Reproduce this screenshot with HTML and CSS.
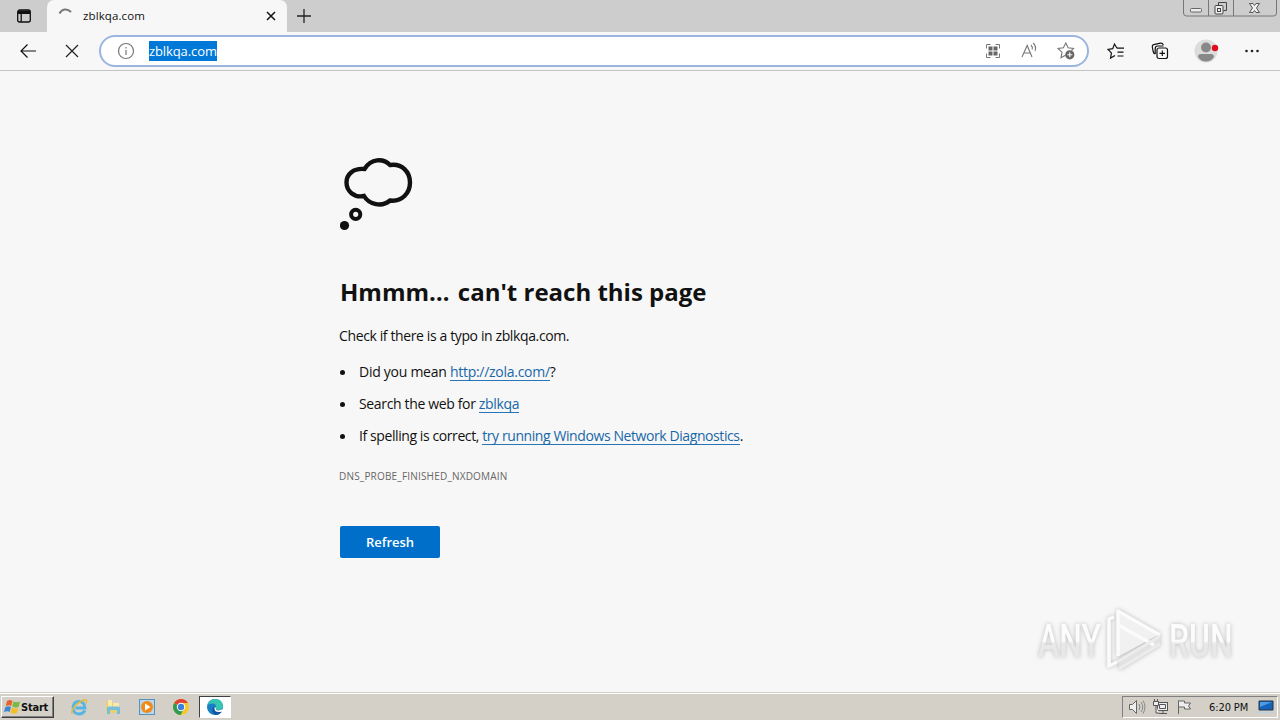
FILE: index.html
```html
<!DOCTYPE html>
<html lang="en">
<head>
    <meta charset="UTF-8">
    <meta name="viewport" content="width=device-width, initial-scale=1.0">
    <title>zblkqa.com</title>
    <link rel="stylesheet" href="styles.css">
</head>
<body>
    <header class="tab-strip">
        <svg class="tab-actions" width="16" height="16" viewBox="0 0 16 16" fill="none" stroke="#111" stroke-width="1.3"><rect x="1.7" y="2" width="12.6" height="12" rx="2"/><path d="M2 3.5h12M2 5h12" stroke-width="2"/><path d="M5.2 5v9"/></svg>
        <div class="tab">
            <svg class="spinner" width="16" height="16" viewBox="0 0 16 16" fill="none" stroke="#777" stroke-width="2"><path d="M1.500 5.500C4 1 9 0 13 4"/></svg>
            <span class="tab-title">zblkqa.com</span>
            <svg class="tab-close" width="10" height="10" viewBox="0 0 10 10" stroke="#111" stroke-width="1.5"><path d="M1 1l8 8M9 1L1 9"/></svg>
        </div>
        <svg class="new-tab" width="16" height="16" viewBox="0 0 16 16" stroke="#222" stroke-width="1.3"><path d="M8 1v14M1 8h14"/></svg>
        <svg class="window-buttons" width="94" height="17" viewBox="0 0 94 17" fill="none" stroke="#777"><path d="M.5 0v13q0 3 3 3h87q3 0 3-3V0M25.500 0v16M50.500 0v16"/><rect x="7.500" y="8.500" width="11" height="3.500" rx="1" fill="#eee" stroke="#666"/><path d="M35.500 5.500V2.500h8v8h-3" stroke="#444"/><rect x="32" y="5.500" width="8" height="8.500" rx="1" fill="#eee" stroke="#444"/><rect x="34.500" y="8.500" width="3" height="3" stroke="#444"/><path d="M66.500 3.500h3.500l1.500 2 1.500-2h3.500l-3 4.500 3 4.500h-3.500l-1.500-2-1.500 2h-3.500l3-4.500z" fill="#eee" stroke="#555"/></svg>
    </header>

    <nav class="toolbar">
        <svg class="back" width="18" height="16" viewBox="0 0 18 16" fill="none" stroke="#111" stroke-width="1.2"><path d="M17 8H2M8.500 1.500L2 8l6.500 6.500"/></svg>
        <svg class="stop" width="14" height="14" viewBox="0 0 14 14" stroke="#222" stroke-width="1.2"><path d="M1 1l12 12M13 1L1 13"/></svg>
        <div class="address-bar">
            <svg width="18" height="18" viewBox="0 0 18 18" fill="none" stroke="#777" stroke-width="1.2"><circle cx="9" cy="9" r="7.500"/><path d="M9 8v5M9 5v1.500"/></svg>
            <span class="url">zblkqa.com</span>
            <div class="address-icons">
                <svg width="16" height="16" viewBox="0 0 16 16" fill="none" stroke="#777"><path d="M1.500 5.500v-4h4M10.500 1.500h4v4M14.500 10.500v4h-4M5.500 14.500h-4v-4"/><path d="M3.500 3.500h4v4h-4zM8.500 3.500h4v4h-4zM3.500 8.500h4v4h-4zM8.500 8.500h4v4h-4z" fill="#666" stroke="none"/></svg>
                <svg width="18" height="18" viewBox="0 0 18 18" fill="none" stroke="#777" stroke-width="1.1"><path d="M2 15L7.200 3.500 12 15M3.800 11h6.600M11 3q2 2 1.200 4.500M13.200 1q3.500 3.500 1.800 8"/></svg>
                <svg width="18" height="18" viewBox="0 0 18 18" fill="none" stroke="#777" stroke-width="1.1"><path d="M8.500 13.200L4 15.800l1-5.600L1 6.500l5.400-.8L8.800 1l2.300 4.700 5.400.8-2 2"/><circle cx="12.800" cy="12.800" r="4.600" fill="#666" stroke="none"/><path d="M12.800 10.300v5M10.300 12.800h5" stroke="#fff"/></svg>
            </div>
        </div>
        <div class="tools">
            <svg width="18" height="18" viewBox="0 0 18 18" fill="none" stroke="#111" stroke-width="1.2"><path d="M10 6.200L7.500 2 5.700 6.700l-4.700.7 3.400 3.500-.8 5.100 4.400-2.500"/><path d="M10 6.200h7M10.500 10.200h6M10.500 14h6"/></svg>
            <svg width="18" height="18" viewBox="0 0 18 18" fill="none" stroke="#111" stroke-width="1.2"><path d="M4.200 12Q2.700 11.500 2.200 9.500L1.300 5Q1 3.200 2.700 2.700L9.500 1.200q2-.3 2.800 1.800"/><path d="M4.200 12V6.500q0-2.500 2.500-2.500h5.800"/><rect x="6" y="6" width="10.500" height="10.500" rx="2"/><path d="M11.300 8.500v5.500M8.500 11.300H14"/></svg>
            <svg class="profile" width="26" height="24" viewBox="0 0 26 24"><circle cx="12" cy="12" r="11.500" fill="#dcdcdc"/><circle cx="12" cy="8.500" r="5" fill="#888"/><path d="M4 18q0-3 3-3h10q3 0 3 3-3 4.500-8 4.500T4 18z" fill="#888"/><circle cx="21" cy="9" r="3.200" fill="#e00b1c"/></svg>
            <svg class="more" width="16" height="4" viewBox="0 0 16 4" fill="#222"><circle cx="2.500" cy="2" r="1.300"/><circle cx="8" cy="2" r="1.300"/><circle cx="13.500" cy="2" r="1.300"/></svg>
        </div>
    </nav>

    <main class="error-page">
        <svg class="cloud" width="74" height="74" viewBox="0 0 74 74" fill="none" stroke="#111" stroke-width="4.400"><path d="M24.500 11C31 .5 43 0 50 7c12-2 20 7 20 17.500S62 44 50 42.500c-8 7-21 4-26-4.500-10 2-17.500-5-17.500-13.500S13.500 10 24.500 11z"/><circle cx="15.700" cy="56.300" r="4.600" stroke-width="4"/><circle cx="4.500" cy="67.500" r="4.600" fill="#111" stroke="none"/></svg>
        <h1>Hmmm<span class="dots">…</span> can't reach this page</h1>
        <p class="summary">Check if there is a typo in zblkqa.com.</p>
        <ul class="suggestions">
            <li class="did-you-mean"><span>Did you mean <a href="#">http://zola.com/</a>?</span></li>
            <li class="search"><span>Search the web for <a href="#">zblkqa</a></span></li>
            <li class="diagnostics"><span>If spelling is correct, <a href="#">try running Windows Network Diagnostics</a>.</span></li>
        </ul>
        <p class="error-code">DNS_PROBE_FINISHED_NXDOMAIN</p>
        <button class="refresh" type="button">Refresh</button>

        <div class="watermark">
            <span>ANY</span>
            <svg width="60" height="66" viewBox="0 0 60 66" fill="none" stroke="#fbfbfb" stroke-linejoin="round"><path d="M14 4v44l41-22z" fill="#f1f1f1" stroke="none"/><path d="M14 52v9l41-25v-8z" fill="#e2e2e2" stroke="none"/><path d="M9 9l-5 2v47l8-4M13 48V3l42 24M13 17l36 20" stroke-width="3.500"/><path d="M12 54l43-26M14 61l41-25" stroke="#ececec" stroke-width="3"/></svg>
            <span>RUN</span>
        </div>
    </main>

    <footer class="taskbar">
        <div class="start">
            <svg width="17" height="16" viewBox="0 0 17 16"><path d="M3 2q3-2 5.500 0L7.200 7Q5 5.500 1.700 7z" fill="#e8632b"/><path d="M9.500 2.500q3 1.500 6.500 0L14.500 8q-3 1-6.300-.5z" fill="#79b943"/><path d="M1.300 8Q4.500 6.500 7 8l-1.400 5Q3.500 11.500 0 13z" fill="#3d88cf"/><path d="M8 8.700q3 1.500 6.300.3L13 14q-3.500 1.500-6.400-.5z" fill="#f5bf24"/></svg>
            <span>Start</span>
        </div>
        <div class="quick-launch">
            <svg width="18" height="18" viewBox="0 0 18 18" fill="none"><path d="M15 12.500Q13 16 9 16q-6-.5-6-6.500Q3.500 3.500 9 3.500t6 6.500H5.500" stroke="#55b5e5" stroke-width="2.800"/><path d="M2.500 16C-1 14 7 4 14 2q4-1 2 3.500" stroke="#e8ba36" stroke-width="1.400"/></svg>
            <svg width="18" height="18" viewBox="0 0 18 18"><path d="M2 3h5l1.500 2H15v10H2z" fill="#e8cf75"/><path d="M4 2h4v8H4zM9 5h6v7H9z" fill="#f8eaaa"/><path d="M3 16v-6q0-1.500 1.500-1.500h10q1.500 0 1.500 1.500v6h-3v-4H6v4z" fill="#76bedc"/></svg>
            <svg width="18" height="18" viewBox="0 0 18 18"><rect x="1.500" y="1.500" width="15" height="15" fill="#b9d7ed" stroke="#5792bd"/><circle cx="9" cy="9" r="6" fill="#f28a17"/><path d="M7 5.500l5.500 3.500L7 12.500z" fill="#fff"/></svg>
            <svg width="18" height="18" viewBox="0 0 18 18"><circle cx="9" cy="9" r="8" fill="#f7c928"/><path d="M9 9L2.100 5A8 8 0 0 1 15.900 5H9z" fill="#df4335"/><path d="M2.100 5A8 8 0 0 0 8.500 17L12 11 9 9z" fill="#319c50"/><circle cx="9" cy="9" r="4.200" fill="#fff"/><circle cx="9" cy="9" r="3.200" fill="#3c7edc"/></svg>
            <div class="active-task">
                <svg width="18" height="18" viewBox="0 0 18 18"><circle cx="9" cy="9" r="8" fill="#167fc5"/><path d="M1.500 7Q4 1 9 1q7.500 0 8 7 0 4-5 4-3 0-2-2.500Q10.500 6 7 5.500 4 5 1.500 7z" fill="#35c5b1"/><path d="M7.500 8Q8 14 16 13.500 13.500 17 9.500 17 4 14 7.500 8z" fill="#1554a0"/><path d="M10 9.500Q9 12.500 12.500 12.500L17.500 11l-1.500 2.500q-8 2-7.500-4z" fill="#fff"/></svg>
            </div>
        </div>
        <div class="tray">
            <svg width="18" height="16" viewBox="0 0 18 16" fill="#eee" stroke="#666"><path d="M1.500 5.500h3l4-4v13l-4-4h-3z"/><path d="M11 5q2 3 0 6M13 3q3.500 5 0 10M15 1.500q4 6.500 0 13" fill="none" stroke="#888"/></svg>
            <svg width="18" height="16" viewBox="0 0 18 16" fill="#eee" stroke="#555"><rect x="5.500" y="3.500" width="10" height="8"/><path d="M7.500 5.500h6v4h-6zM7 14.500h8M11 11.500v3M2.500 0v3M5.500 0v3M1.500 2.500h5v4h-5zM4 6.500V14h3"/></svg>
            <svg width="18" height="16" viewBox="0 0 18 16" fill="#eee" stroke="#666"><path d="M2.500 15V1.500M2.500 2h6v2h6l-2 3 2 3h-6V8h-6z"/></svg>
            <span class="clock">6:20 PM</span>
            <svg class="desktop" width="16" height="14" viewBox="0 0 16 14"><path d="M1 1h14v9H1z" fill="#1762b8" stroke="#234"/><path d="M2 2h12L2 7z" fill="#4d9ae5"/><path d="M0 11.500h16V13H0z" fill="#bcd0df"/></svg>
        </div>
    </footer>
</body>
</html>
```

FILE: styles.css
```css
* {
    box-sizing: border-box;
}

body {
    margin: 0;
    width: 1280px;
    height: 720px;
    overflow: hidden;
    display: flex;
    flex-direction: column;
    background-color: #f7f7f7;
    color: #111;
    font-family: "Open Sans", "Noto Sans", sans-serif;
}

svg {
    display: block;
    flex: none;
}

/* Tabs */
.tab-strip {
    flex: none;
    display: flex;
    height: 32px;
    background-color: #cdcdcd;
}

.tab-actions {
    margin: 8px 7px 0 16px;
}

.tab {
    display: flex;
    align-items: center;
    width: 240px;
    margin-left: 8px;
    padding: 0 11px 0 11px;
    border-radius: 7px 7px 0 0;
    background-color: #f7f7f7;
}

.tab-title {
    flex: 1;
    margin-left: 9px;
    padding-bottom: 2px;
    font-size: 11.5px;
    letter-spacing: .1px;
}

.new-tab {
    margin: 8px 0 0 9px;
}

.window-buttons {
    margin: 0 3px 0 auto;
}

/* Toolbar */
.toolbar {
    flex: none;
    display: flex;
    align-items: center;
    height: 39px;
    padding-left: 19px;
    border-bottom: 1px solid #c4c4c4;
}

.stop {
    margin-left: 28px;
}

.address-bar {
    display: flex;
    align-items: center;
    width: 990px;
    height: 32px;
    margin-left: 20px;
    padding: 0 12px 0 16px;
    border: 2px solid #9bb5df;
    border-radius: 16px;
    background-color: #fff;
}

.url {
    height: 20px;
    width: 68px;
    margin-left: 14px;
    background-color: #0078d7;
    color: #fff;
    font-size: 13px;
    letter-spacing: -.1px;
    line-height: 20px;
    white-space: nowrap;
}

.address-icons {
    display: flex;
    align-items: center;
    gap: 19px;
    margin-left: auto;
}

.tools {
    display: flex;
    align-items: center;
    margin-left: 18px;
    gap: 26px;
}

.profile {
    margin-left: -1px;
}

.more {
    margin-left: -2px;
}

/* Error page */
.error-page {
    flex: 1;
    position: relative;
    padding: 87px 340px 0;
}

h1 {
    margin: 44px 0 0;
    font-size: 24px;
    line-height: 32px;
    font-weight: 700;
    white-space: nowrap;
}

.dots {
    letter-spacing: 2px;
}

.summary {
    margin: 18px 0 0 -1px;
    font-size: 14px;
    letter-spacing: -.38px;
    line-height: 20px;
    white-space: nowrap;
}

.suggestions {
    margin: 10px 0 0;
    padding: 0;
    list-style: none;
    font-size: 14px;
    line-height: 32px;
}

.suggestions li {
    display: flex;
    align-items: center;
    white-space: nowrap;
}

.suggestions li::before {
    content: "";
    width: 5px;
    height: 5px;
    margin-right: 14px;
    border-radius: 50%;
    background-color: #111;
}

.did-you-mean {
    letter-spacing: -.27px;
}

.search {
    letter-spacing: -.35px;
}

.diagnostics {
    letter-spacing: -.41px;
}

a {
    display: inline-block;
    height: 18px;
    border-bottom: 1px solid #2876b5;
    color: #1767a8;
    line-height: 18px;
    text-decoration: none;
}

.error-code {
    margin: 16px 0 0 -1px;
    color: #666;
    font-size: 10px;
    letter-spacing: .19px;
    line-height: 16px;
}

.refresh {
    display: block;
    width: 100px;
    height: 32px;
    margin-top: 42px;
    padding: 0;
    border: 0;
    border-radius: 2px;
    background-color: #006fc9;
    color: #fff;
    font-family: inherit;
    font-size: 13px;
    font-weight: 600;
}

.watermark {
    position: absolute;
    right: 48px;
    bottom: 18px;
    display: flex;
    align-items: center;
    gap: 4px;
    font-family: "Roboto", sans-serif;
    font-size: 48px;
    font-weight: 500;
    line-height: 66px;
    filter: drop-shadow(0 0 2px #bbb);
}

.watermark span {
    width: 63px;
    background: linear-gradient(#fcfcfc 50%, #e8e8e8 54%);
    background-size: 100px 100%;
    background-clip: text;
    -webkit-background-clip: text;
    color: transparent;
    font-size: 47px;
    transform: scaleX(.68);
    transform-origin: left;
    padding-right: 31px;
    margin-right: -31px;
}

.watermark span:first-child {
    width: 94px;
}

.watermark span:last-child {
    width: 94px;
}

/* Taskbar */
.taskbar {
    flex: none;
    display: flex;
    align-items: center;
    height: 28px;
    padding: 1px 2px 0 1px;
    border-top: 1px solid #d4d0c8;
    box-shadow: inset 0 1px #fff;
    background-color: #d4d0c8;
}

.start {
    display: flex;
    align-items: center;
    width: 53px;
    height: 22px;
    padding-left: 2px;
    border: 1px solid;
    border-color: #fff #404040 #404040 #fff;
    box-shadow: inset -1px -1px #808080;
    font-family: "DejaVu Sans Condensed", "DejaVu Sans", sans-serif;
    font-size: 11px;
    font-weight: 700;
    letter-spacing: -.2px;
}

.quick-launch {
    display: flex;
    align-items: center;
    gap: 16px;
    margin-left: 16px;
}

.active-task {
    display: flex;
    align-items: center;
    justify-content: center;
    width: 32px;
    height: 22px;
    margin-left: -7px;
    border: 1px solid;
    border-color: #404040 #fff #fff #404040;
    background-color: #fff;
}

.tray {
    display: flex;
    align-items: center;
    width: 156px;
    height: 22px;
    margin-left: auto;
    padding-left: 5px;
    border: 1px solid;
    border-color: #808080 #fff #fff #808080;
    gap: 6px;
}

.clock {
    width: 43px;
    margin-left: 9px;
    font-family: "DejaVu Sans Condensed", sans-serif;
    font-size: 11px;
    letter-spacing: -.1px;
    white-space: nowrap;
}
```
